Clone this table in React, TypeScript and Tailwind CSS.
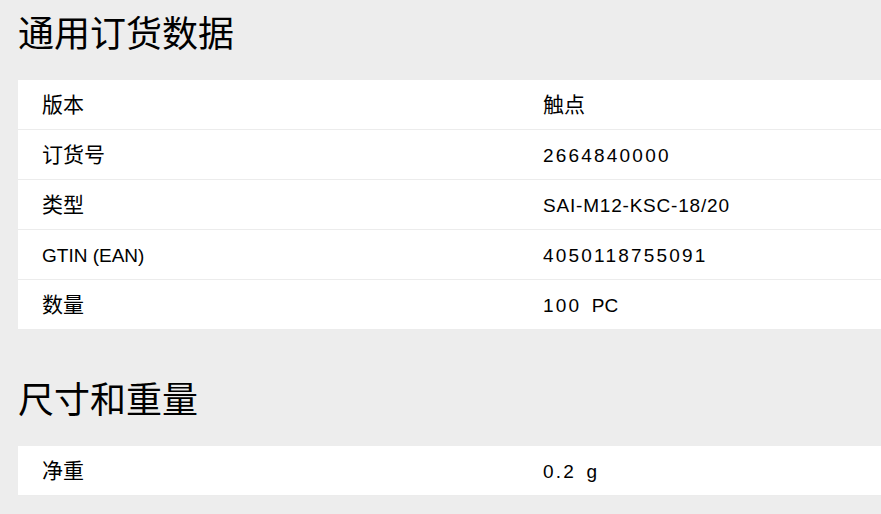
const font = {
  fontFamily:
    '"Liberation Sans", Arial, "Noto Sans CJK SC", sans-serif',
};

type Row = { label: string; value: string };

const orderRows: Row[] = [
  { label: "版本", value: "触点" },
  { label: "订货号", value: "2664840000" },
  { label: "类型", value: "SAI-M12-KSC-18/20" },
  { label: "GTIN (EAN)", value: "4050118755091" },
  { label: "数量", value: "100\u00a0 PC" },
];

const weightRows: Row[] = [{ label: "净重", value: "0.2\u00a0 g" }];

const isCjk = (s: string) => /[\u4e00-\u9fff]/.test(s);
const isNumeric = (s: string) => /^[\d.]+/.test(s) && !/[A-Z]-/.test(s);

function Cell({ text, label }: { text: string; label?: boolean }) {
  if (isCjk(text)) {
    return <span className="text-[21px] leading-none">{text}</span>;
  }
  if (isNumeric(text)) {
    // digits in the source font run wider than Arial's
    const [num, ...rest] = text.split("\u00a0");
    return (
      <span className="text-[19px] leading-none whitespace-pre">
        <span className="tracking-[2.2px]">{num}</span>
        {rest.length > 0 && "\u00a0" + rest.join("\u00a0")}
      </span>
    );
  }
  return (
    <span
      className={
        label
          ? "text-[19px] leading-none"
          : "text-[19px] leading-none tracking-[0.8px]"
      }
    >
      {text}
    </span>
  );
}

function DataTable({ rows }: { rows: Row[] }) {
  return (
    <div className="bg-white">
      {rows.map((r) => (
        <div
          key={r.label}
          className="grid grid-cols-[501px_1fr] h-[50px] items-center border-b border-[#ececec] text-black pt-1"
        >
          <div className="pl-6">
            <Cell text={r.label} label />
          </div>
          <div className="pl-6">
            <Cell text={r.value} />
          </div>
        </div>
      ))}
    </div>
  );
}

function Heading({ children }: { children: string }) {
  return (
    <h2 className="text-[36px] leading-[44px] font-normal text-black mb-[23px]">
      {children}
    </h2>
  );
}

export default function App() {
  return (
    <div
      className="w-[881px] h-[514px] overflow-hidden bg-[#ededed] pl-[18px] pt-[13px]"
      style={font}
    >
      <section>
        <Heading>通用订货数据</Heading>
        <DataTable rows={orderRows} />
      </section>
      <section className="mt-[49px]">
        <Heading>尺寸和重量</Heading>
        <DataTable rows={weightRows} />
      </section>
    </div>
  );
}
